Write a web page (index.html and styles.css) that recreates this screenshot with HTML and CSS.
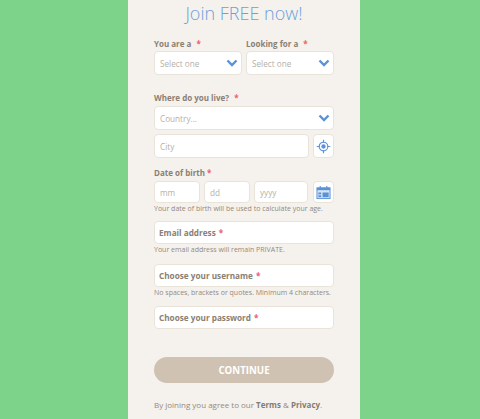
FILE: index.html
```html
<!DOCTYPE html>
<html lang="en">
<head>
<meta charset="utf-8">
<title>Join FREE now!</title>
<link rel="stylesheet" href="styles.css">
</head>
<body>
<main class="panel">
  <h1 class="title">Join FREE now!</h1>
  <form class="form">
    <div class="row row-selects">
      <div class="col">
        <div class="label">You are a <span class="req">*</span></div>
        <div class="field select"><span class="ph">Select one</span><svg class="chev" viewBox="0 0 12 8"><path d="M1.500 1.500 6 6l4.500-4.500"/></svg></div>
      </div>
      <div class="col">
        <div class="label">Looking for a <span class="req">*</span></div>
        <div class="field select"><span class="ph">Select one</span><svg class="chev" viewBox="0 0 12 8"><path d="M1.500 1.500 6 6l4.500-4.500"/></svg></div>
      </div>
    </div>

    <div class="label label-live">Where do you live? <span class="req">*</span></div>
    <div class="field select"><span class="ph">Country...</span><svg class="chev" viewBox="0 0 12 8"><path d="M1.500 1.500 6 6l4.500-4.500"/></svg></div>
    <div class="row row-city">
      <div class="field grow"><span class="ph">City</span></div>
      <div class="field iconbtn">
        <svg class="ico" viewBox="0 0 16 16"><circle cx="8" cy="8" r="4.600" class="ring"/><circle cx="8" cy="8" r="2.300" class="dot"/><path class="ring" d="M8 .8v3M8 12.200v3M.8 8h3M12.200 8h3"/></svg>
      </div>
    </div>

    <div class="label label-dob">Date of birth <span class="req req-tight">*</span></div>
    <div class="row row-dob">
      <div class="field small mm"><span class="ph">mm</span></div>
      <div class="field small dd"><span class="ph">dd</span></div>
      <div class="field small yy"><span class="ph">yyyy</span></div>
      <div class="field iconbtn small">
        <svg class="ico" viewBox="0 0 16 16"><rect x="1" y="3" width="14" height="11.500" class="cal"/><rect x="1" y="3" width="14" height="2.500" class="calhead"/><path class="ring" d="M4.500 1v3M11.500 1v3"/><rect x="7" y="8" width="6.500" height="5" class="calhead"/><rect x="2.500" y="8" width="3" height="2" class="calhead"/><rect x="2.500" y="11" width="3" height="2" class="calhead"/></svg>
      </div>
    </div>
    <p class="help">Your date of birth will be used to calculate your age.</p>

    <div class="field strong field-email">Email address <span class="req req-gap">*</span></div>
    <p class="help">Your email address will remain PRIVATE.</p>

    <div class="field strong field-user">Choose your username <span class="req req-gap">*</span></div>
    <p class="help">No spaces, brackets or quotes. Minimum 4 characters.</p>

    <div class="field strong field-pass">Choose your password <span class="req req-gap">*</span></div>

    <button class="continue" type="button">CONTINUE</button>
    <p class="terms">By joining you agree to our <b>Terms</b> &amp; <b>Privacy</b>.</p>
  </form>
</main>
</body>
</html>
```
FILE: styles.css
```css
* { box-sizing: border-box; }
html, body { margin: 0; height: 419px; overflow: hidden; }
body {
  background: #7dd389;
  font-family: "Open Sans", "Liberation Sans", sans-serif;
  color: #8a8073;
}
.panel {
  width: 232px;
  height: 419px;
  margin-left: 128px;
  padding: 0 26px;
  background: #f5f2ee;
  overflow: hidden;
}
.title {
  margin: 0;
  height: 36px;
  font-size: 18px;
  line-height: 27px;
  font-weight: 300;
  text-align: center;
  color: #6d9fdc;
}
.form { display: flex; flex-direction: column; }
.row { display: flex; }
.row-selects { gap: 4px; }
.col { flex: 1 1 0; }
.label {
  height: 15px;
  font-size: 8px;
  line-height: 15px;
  font-weight: 700;
  color: #8a8073;
}
.req { color: #e8636b; margin-left: 3px; }
.req-tight { margin-left: 0; }
.req-gap { margin-left: 3px; }
.field {
  display: flex;
  align-items: center;
  height: 24px;
  padding: 0 5px;
  background: #fff;
  border: 1px solid #e9e3da;
  border-radius: 4px;
  font-size: 8.200px;
}
.ph { color: #b5b0a8; }
.select { justify-content: space-between; padding-right: 3px; }
.chev { width: 12px; height: 8px; fill: none; stroke: #5b92d6; stroke-width: 2.400; }
.label-live { margin-top: 15px; margin-bottom: 1px; }
.row-city { gap: 4px; margin-top: 4px; }
.grow { flex: 1; }
.iconbtn { width: 21px; flex: none; justify-content: center; padding: 0; }
.ico { width: 15px; height: 15px; }
.ring { fill: none; stroke: #5b92d6; stroke-width: 1.200; }
.dot { fill: #5b92d6; }
.cal { fill: #d5e3f5; stroke: #5b92d6; stroke-width: 1; }
.calhead { fill: #5b92d6; }
.label-dob { margin-top: 7px; margin-bottom: 1px; }
.row-dob { gap: 4px; }
.small { height: 22px; }
.mm { width: 46px; }
.dd { width: 46px; }
.yy { width: 54px; margin-right: 1px; }
.help {
  margin: 0;
  height: 12px;
  font-size: 7px;
  line-height: 12px;
  color: #94897c;
  white-space: nowrap;
}
.strong { font-weight: 700; font-size: 8.200px; color: #8a8073; padding: 0 4px; }
.field-email { margin-top: 6px; height: 23px; }
.field-user { margin-top: 8px; height: 23px; }
.field-pass { margin-top: 7px; height: 23px; }
.continue {
  width: 180px;
  height: 26px;
  margin-top: 28px;
  border: 0;
  border-radius: 13px;
  background: #cfc2b3;
  color: #fff;
  font: 700 9.700px/26px "Open Sans", "Liberation Sans", sans-serif;
}
.terms {
  margin: 14px 0 0;
  font-size: 8px;
  line-height: 15px;
  color: #94897c;
  white-space: nowrap;
}
.terms b { font-weight: 700; color: #857b6f; }
```
